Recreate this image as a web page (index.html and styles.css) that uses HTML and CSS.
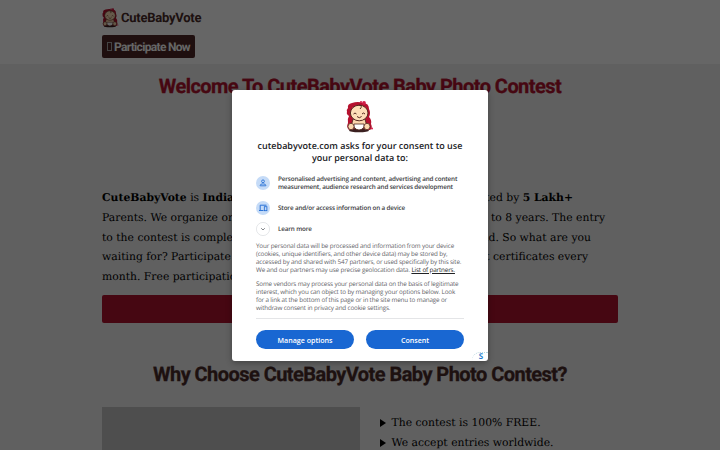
FILE: index.html
```html
<!DOCTYPE html>
<html lang="en">
<head>
  <meta charset="UTF-8">
  <meta name="viewport" content="width=device-width, initial-scale=1.0">
  <title>CuteBabyVote Baby Photo Contest</title>
  <link rel="stylesheet" href="styles.css">
</head>
<body>
  <svg width="0" height="0" class="defs">
    <symbol id="baby" viewBox="0 0 28 32">
      <path d="M2 7q-1-4 4-5 6-2 11 0 6 0 6 6 2 4 0 8 3 3 2 7 2 4-1 6H3q-3-3-1-7-1-4 1-7-3-2-2-4 -1-2 1-4z" fill="#b5122f"/>
      <circle cx="18" cy="2" r="1.900" fill="#d31e48"/>
      <circle cx="15" cy="1" r="1" fill="#d31e48"/>
      <circle cx="26" cy="27.500" r="1" fill="#d31e48"/>
      <ellipse cx="13" cy="29.500" rx="10" ry="1.800" fill="#3b2020"/>
      <path d="M7 18h12l2 8q-8 4-16 0z" fill="#fbd7ae" stroke="#54291f" stroke-width=".9"/>
      <path d="M8 23h10v3q-2 3-5 3t-5-3z" fill="#fff" stroke="#54291f" stroke-width=".8"/>
      <ellipse cx="5" cy="25.500" rx="3" ry="3.200" fill="#fbd7ae" stroke="#54291f" stroke-width=".8"/>
      <ellipse cx="21" cy="25.500" rx="3" ry="3.200" fill="#fbd7ae" stroke="#54291f" stroke-width=".8"/>
      <ellipse cx="13.200" cy="12" rx="8.800" ry="7.800" fill="#fddfb8" stroke="#54291f"/>
      <path d="M13 4q4 1 1 4M7.500 13q1.500-2 3 0M16 13q1.500-2 3 0M11 15.500q2.300 2.500 4.600 0" fill="none" stroke="#54291f"/>
    </symbol>
  </svg>

  <header class="header">
    <div class="wrap">
      <div class="brand"><svg class="brand-logo"><use href="#baby"/></svg><span>CuteBabyVote</span></div>
      <a class="participate"><i class="tofu"></i><span>Participate Now</span></a>
    </div>
  </header>

  <main class="wrap">
    <h1><span>Welcome To CuteBabyVote Baby Photo Contest</span></h1>
    <div class="intro">
      <p class="l1"><span><b>CuteBabyVote</b> is <b>India's</b></span><span>trusted by <b>5 Lakh+</b></span></p>
      <p class="l2"><span>Parents. We organize online</span><span>up to 8 years. The entry</span></p>
      <p class="l3"><span>to the contest is completely</span><span>world. So what are you</span></p>
      <p class="l4"><span>waiting for? Participate now</span><span>get certificates every</span></p>
      <p><span>month. Free participation.</span></p>
    </div>
    <div class="cta"></div>
    <h2><span>Why Choose CuteBabyVote Baby Photo Contest?</span></h2>
    <div class="why">
      <div class="photo"></div>
      <ul>
        <li>The contest is 100% FREE.</li>
        <li>We accept entries worldwide.</li>
      </ul>
    </div>
  </main>

  <div class="overlay">
    <div class="dialog">
      <svg class="dialog-logo"><use href="#baby"/></svg>
      <h3>cutebabyvote.com asks for your consent to use<br>your personal data to:</h3>
      <div class="purpose tall">
        <svg class="icon" viewBox="0 0 14 14"><circle cx="7" cy="7" r="7" fill="#c5dbf7"/><circle cx="7" cy="5.300" r="1.400" fill="none" stroke="#1967d2" stroke-width=".8"/><path d="M4.200 9.800V9.200q0-1.300 2.800-1.300t2.800 1.300v.6z" fill="none" stroke="#1967d2" stroke-width=".8"/></svg>
        <span>Personalised advertising and content, advertising and content<br>measurement, audience research and services development</span>
      </div>
      <div class="purpose">
        <svg class="icon" viewBox="0 0 14 14"><circle cx="7" cy="7" r="7" fill="#c5dbf7"/><path d="M10.500 4.200H4.200v4.800M3 9.500h4.500" fill="none" stroke="#1967d2" stroke-width=".9"/><rect x="8.300" y="5.700" width="2.600" height="4" fill="none" stroke="#1967d2" stroke-width=".8"/></svg>
        <span>Store and/or access information on a device</span>
      </div>
      <div class="purpose more">
        <svg class="icon" viewBox="0 0 14 14"><circle cx="7" cy="7" r="6.600" fill="#fff" stroke="#dadce0" stroke-width=".7"/><path d="M5.200 6.200L7 8l1.800-1.800" fill="none" stroke="#5f6368" stroke-width=".8"/></svg>
        <span>Learn more</span>
      </div>
      <p class="legal">Your personal data will be processed and information from your device<br>(cookies, unique identifiers, and other device data) may be stored by,<br>accessed by and shared with 547 partners, or used specifically by this site.<br>We and our partners may use precise geolocation data. <a>List of partners.</a></p>
      <p class="legal">Some vendors may process your personal data on the basis of legitimate<br>interest, which you can object to by managing your options below. Look<br>for a link at the bottom of this page or in the site menu to manage or<br>withdraw consent in privacy and cookie settings.</p>
      <div class="actions">
        <button>Manage options</button>
        <button>Consent</button>
      </div>
      <div class="badge">S</div>
    </div>
  </div>
</body>
</html>
```
FILE: styles.css
```css
* {
  box-sizing: border-box;
}

body {
  margin: 0;
  height: 450px;
  overflow: hidden;
  background: #f0f0f0;
  color: #000;
  font-family: "DejaVu Serif", serif;
  text-rendering: geometricPrecision;
}

.defs {
  position: absolute;
}

.wrap {
  width: 516px;
  margin: 0 auto;
}

.header {
  height: 64px;
  padding-top: 8px;
  background: #fff;
}

.brand {
  display: flex;
  align-items: center;
  height: 20px;
  gap: 2px;
  color: #4a2c2a;
  font: bold 13px Roboto, sans-serif;
  letter-spacing: -0.25px;
}

.brand-logo {
  width: 17px;
  height: 20px;
}

.participate {
  display: flex;
  align-items: center;
  width: 93px;
  height: 23px;
  margin-top: 7px;
  padding-left: 5px;
  gap: 2px;
  border-radius: 2px;
  background: #4e2626;
  color: #fff;
  font: bold 12px Roboto, sans-serif;
  letter-spacing: -0.7px;
  white-space: nowrap;
}

.participate span {
  letter-spacing: -0.68px;
}

.tofu {
  width: 5px;
  height: 9px;
  border: 1px solid #aaa;
}

h1,
h2 {
  margin: 0;
  text-align: center;
  white-space: nowrap;
  font: bold 20px/24px Roboto, sans-serif;
  letter-spacing: -0.55px;
  -webkit-text-stroke: 0.3px;
}

h1 {
  padding-top: 10px;
  color: #b0122d;
}

h2 {
  margin-top: 39px;
  color: #4a2c2a;
}

.intro {
  margin-top: 90px;
  font-size: 10.8px;
  line-height: 19.8px;
}

.intro p {
  display: flex;
  justify-content: space-between;
  margin: 0;
  white-space: nowrap;
}

.intro .l1 {
  width: 471px;
}

.intro .l2 {
  width: 503px;
}

.intro .l3 {
  width: 489px;
}

.intro .l4 {
  width: 486px;
}

.cta {
  height: 28px;
  margin-top: 8px;
  border-radius: 2px;
  background: #b0122d;
}

.why {
  display: flex;
  margin-top: 21px;
}

.photo {
  width: 258px;
  height: 60px;
  background: #c4c4c4;
}

.why ul {
  margin: 6px 0 0 20px;
  padding: 0;
  list-style: none;
  font-size: 10.8px;
  line-height: 20px;
}

.why li {
  display: flex;
  align-items: center;
  gap: 5.5px;
}

.why li::before {
  content: "";
  border: solid transparent;
  border-width: 4px 0 4px 6px;
  border-left-color: #000;
}

.overlay {
  position: absolute;
  inset: 0;
  background: rgba(0, 0, 0, 0.6);
}

.dialog {
  position: absolute;
  left: 232px;
  top: 90px;
  width: 256px;
  height: 271px;
  padding: 11px 24px 0;
  border-radius: 3px;
  background: #fff;
  box-shadow: 0 2px 6px rgba(0, 0, 0, 0.3);
  font-family: "Open Sans", sans-serif;
}

.dialog-logo {
  display: block;
  width: 28px;
  height: 32px;
  margin: 0 auto;
}

.dialog h3 {
  margin: 7px -10px 0;
  color: #202124;
  font-size: 9px;
  font-weight: 600;
  line-height: 12px;
  text-align: center;
  white-space: nowrap;
}

.purpose {
  display: flex;
  align-items: center;
  height: 14px;
  margin-top: 10px;
  gap: 8px;
  color: #3c4043;
  font-size: 6.3px;
  letter-spacing: -0.15px;
  font-weight: 600;
  line-height: 8px;
  white-space: nowrap;
}

.purpose.tall {
  height: 16px;
  margin-top: 11px;
}

.purpose.more {
  margin-top: 7px;
}

.icon {
  flex: none;
  width: 14px;
  height: 14px;
}

.legal {
  margin: 6px 0 0;
  color: #5f6368;
  font-size: 6.3px;
  letter-spacing: -0.15px;
  line-height: 8px;
  white-space: nowrap;
}

.legal a {
  color: #202124;
  text-decoration: underline;
}

.actions {
  display: flex;
  gap: 12px;
  margin-top: 6px;
  padding-top: 11px;
  border-top: 1px solid #e4e5e7;
}

.actions button {
  flex: 1;
  height: 19px;
  padding: 0;
  border: none;
  border-radius: 10px;
  background: #1967d2;
  color: #fff;
  font: 600 7.1px "Open Sans", sans-serif;
}

.badge {
  position: absolute;
  right: 0;
  bottom: 0;
  width: 16px;
  height: 9px;
  padding-left: 2px;
  border-top: 1px dotted #b9d7df;
  border-radius: 8px 0 0 0;
  color: #287fd0;
  font: bold 8px/8px "Open Sans", sans-serif;
  text-align: center;
}
```
